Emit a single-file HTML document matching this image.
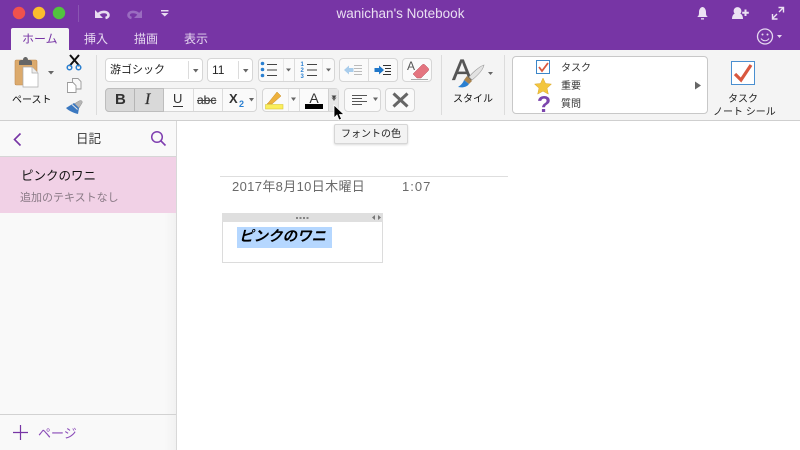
<!DOCTYPE html>
<html><head><meta charset="utf-8"><style>
*{box-sizing:border-box}
html,body{margin:0;padding:0}
body{width:800px;height:450px;overflow:hidden;position:relative;background:#fff;font-family:"Liberation Sans","Noto Sans CJK JP",sans-serif;color:#222}
.a{position:absolute;white-space:nowrap}
.box{position:absolute;background:#fafafa;border:1px solid #d6d6d6;border-radius:4px}
.dv{position:absolute;background:#dcdcdc;width:1px}
.fd{position:absolute;background:#e8e8e8;width:1px}
.tab{position:absolute;top:31px;font-size:12px;line-height:16px;color:#e6d8f0}
svg{position:absolute;left:0;top:0}
</style></head><body>
<div class="a" style="left:0;top:0;width:800px;height:50px;background:#7735a5"></div>
<div class="a" style="left:11px;top:28px;width:58px;height:22px;background:#f5f5f5;border-radius:2px 2px 0 0"></div>
<div class="a" style="left:0;top:50px;width:800px;height:71px;background:#f4f4f4;border-bottom:1px solid #cfcfcf"></div>
<div class="a" style="left:0;top:121px;width:177px;height:329px;background:linear-gradient(90deg,#f9f9f9 165px,#f1f1f1 176px);border-right:1px solid #d8d8d8"></div>
<div class="a" style="left:0;top:121px;width:176px;height:36px;background:#f9f9f9;border-bottom:1px solid #d6d6d6"></div>
<div class="a" style="left:0;top:157px;width:176px;height:56px;background:#f1d1e6"></div>
<div class="a" style="left:0;top:414px;width:176px;height:1px;background:#d2d2d2"></div>

<div class="a" style="left:0;width:800px;top:6px;text-align:center;font-size:13.5px;line-height:16px;color:#eadff2;padding-left:1px">wanichan's Notebook</div>
<div class="tab" style="left:22px;color:#7735a5">ホーム</div>
<div class="tab" style="left:84px">挿入</div>
<div class="tab" style="left:134px">描画</div>
<div class="tab" style="left:184px">表示</div>

<div class="box" style="left:105px;top:58px;width:98px;height:24px;background:#fff"></div>
<div class="dv" style="left:188px;top:61px;height:18px"></div>
<div class="a" style="left:110px;top:62px;font-size:11px;line-height:16px">游ゴシック</div>
<div class="box" style="left:207px;top:58px;width:46px;height:24px;background:#fff"></div>
<div class="dv" style="left:238px;top:61px;height:18px"></div>
<div class="a" style="left:212px;top:62px;font-size:12px;line-height:16px">11</div>

<div class="box" style="left:258px;top:58px;width:77px;height:24px"></div>
<div class="fd" style="left:283px;top:59px;height:22px"></div>
<div class="dv" style="left:294px;top:59px;height:22px"></div>
<div class="fd" style="left:322px;top:59px;height:22px"></div>
<div class="box" style="left:339px;top:58px;width:59px;height:24px"></div>
<div class="dv" style="left:368px;top:59px;height:22px"></div>
<div class="box" style="left:402px;top:58px;width:30px;height:24px"></div>

<div class="box" style="left:105px;top:88px;width:152px;height:24px"></div>
<div class="a" style="left:105px;top:88px;width:59px;height:24px;background:#d9d9d9;border:1px solid #bdbdbd;border-radius:4px 0 0 4px"></div>
<div class="dv" style="left:134px;top:89px;height:22px;background:#b5b5b5"></div>
<div class="dv" style="left:193px;top:89px;height:22px"></div>
<div class="dv" style="left:222px;top:89px;height:22px"></div>
<div class="a" style="left:115px;top:91px;font:bold 15px/18px 'Liberation Sans';color:#333">B</div>
<div class="a" style="left:145px;top:91px;font:italic 16px/18px 'Liberation Serif';color:#333;-webkit-text-stroke:.3px #333">I</div>
<div class="a" style="left:173px;top:91px;font:13px/16px 'Liberation Sans';color:#333">U</div>
<div class="a" style="left:173px;top:106px;width:10px;height:1px;background:#333"></div>
<div class="a" style="left:197px;top:92px;font:12px/16px 'Liberation Sans';color:#444;text-decoration:line-through;-webkit-text-stroke:.2px #444">abc</div>
<div class="a" style="left:229px;top:91px;font:bold 13px/16px 'Liberation Sans';color:#333">X</div>
<div class="a" style="left:239px;top:98px;font:bold 9px/12px 'Liberation Sans';color:#2a7fd0">2</div>

<div class="box" style="left:262px;top:88px;width:77px;height:24px"></div>
<div class="fd" style="left:288px;top:89px;height:22px"></div>
<div class="dv" style="left:299px;top:89px;height:22px"></div>
<div class="a" style="left:328px;top:89px;width:10px;height:22px;background:#e6e6e6;border-left:1px solid #d0d0d0"></div>
<div class="a" style="left:305px;top:90px;font:14px/16px 'Liberation Sans';color:#333;width:18px;text-align:center">A</div>
<div class="box" style="left:344px;top:88px;width:37px;height:24px"></div>
<div class="box" style="left:385px;top:88px;width:30px;height:24px"></div>

<div class="dv" style="left:96px;top:55px;height:60px"></div>
<div class="dv" style="left:441px;top:55px;height:60px"></div>
<div class="dv" style="left:504px;top:55px;height:60px"></div>
<div class="a" style="left:12px;top:94px;font-size:10px;line-height:14px;color:#111">ペースト</div>
<div class="a" style="left:453px;top:93px;font-size:10px;line-height:14px;color:#111">スタイル</div>
<div class="a" style="left:452px;top:54px;font:30px/34px 'Liberation Sans';color:#555;-webkit-text-stroke:.3px #555">A</div>

<div class="box" style="left:512px;top:56px;width:196px;height:58px;background:#fff;border-color:#c8c8c8"></div>
<div class="a" style="left:561px;top:62px;font-size:10px;line-height:14px;color:#333">タスク</div>
<div class="a" style="left:561px;top:80px;font-size:10px;line-height:14px;color:#333">重要</div>
<div class="a" style="left:561px;top:98px;font-size:10px;line-height:14px;color:#333">質問</div>
<div class="a" style="left:537px;top:92px;font:bold 23px/24px 'Liberation Sans';color:#7b45ad">?</div>
<div class="a" style="left:713px;top:93px;width:60px;text-align:center;font-size:10px;line-height:13px;color:#222">タスク<br>ノート シール</div>

<div class="a" style="left:76px;top:131px;font-size:12.5px;line-height:17px;color:#333">日記</div>
<div class="a" style="left:21px;top:168px;font-size:12.5px;line-height:17px;color:#111">ピンクのワニ</div>
<div class="a" style="left:20px;top:191px;font-size:11px;line-height:15px;color:#8a7a86">追加のテキストなし</div>
<div class="a" style="left:38px;top:426px;font-size:13px;line-height:16px;color:#8a4bb8">ページ</div>

<div class="a" style="left:220px;top:176px;width:288px;height:1px;background:#dedede"></div>
<div class="a" style="left:232px;top:179px;font-size:13px;letter-spacing:.35px;line-height:15px;color:#6a6a6a">2017年8月10日木曜日</div>
<div class="a" style="left:402px;top:179px;font-size:13px;letter-spacing:1px;line-height:15px;color:#6a6a6a">1:07</div>
<div class="a" style="left:222px;top:213px;width:161px;height:50px;border:1px solid #dcdcdc;background:#fff"></div>
<div class="a" style="left:222px;top:213px;width:161px;height:9px;background:#dfdfdf"></div>
<div class="a" style="left:237px;top:227px;width:95px;height:21px;background:#b5d7ff"></div>
<div class="a" style="left:239px;top:228px;font-size:14.5px;font-weight:bold;font-style:italic;line-height:18px;color:#000">ピンクのワニ</div>

<div class="a" style="left:334px;top:124px;width:74px;height:20px;background:#f3f3f3;border:1px solid #d6d6d6;border-radius:2px;box-shadow:0 1px 2px rgba(0,0,0,.15);font-size:10px;line-height:19px;text-align:center;color:#222">フォントの色</div>

<svg width="800" height="450" viewBox="0 0 800 450">
<circle cx="19" cy="13" r="6.200" fill="#f0524e"/><circle cx="39" cy="13" r="6.200" fill="#fbbd2e"/><circle cx="59" cy="13" r="6.200" fill="#52c33f"/>
<rect x="78" y="5" width="1" height="17" fill="#8a55b2"/>
<path d="M95 10v8h8z" fill="#e8dcf0"/><path d="M98 14.500c3-3.500 10-3.500 10.500 .5 0 1.500-1 2.500-3 3" fill="none" stroke="#e8dcf0" stroke-width="2.600"/>
<g transform="translate(237 0) scale(-1 1)"><path d="M95 10v8h8z" fill="#9a6cc0"/><path d="M98 14.500c3-3.500 10-3.500 10.500 .5 0 1.500-1 2.500-3 3" fill="none" stroke="#9a6cc0" stroke-width="2.600"/></g>
<path d="M161 10h7.500v1.500h-7.500zM161 13h7.500l-3.750 3.500z" fill="#e8dcf0"/>
<path d="M697 17c2-1 2-3 2-5 0-3 2-5 3.500-5s3.500 2 3.500 5c0 2 0 4 2 5z" fill="#ece2f3"/><path d="M701 18.200h3v1.300h-3z" fill="#ece2f3"/>
<circle cx="737.500" cy="11" r="3.900" fill="#ece2f3"/><path d="M732 19c0-5 3-6 5.500-6s5.500 1 5.500 6z" fill="#ece2f3"/><path d="M745.500 9.500v6.500M742.200 12.700h6.600" stroke="#ece2f3" stroke-width="2"/>
<path d="M772.500 18.500l4.500-4.500M772.500 14v5h5M783.500 7.500l-4.500 4.500M778.500 7.500h5v5" fill="none" stroke="#ece2f3" stroke-width="1.400"/>
<circle cx="765" cy="36.500" r="7.500" fill="none" stroke="#e6d8f0" stroke-width="1.300"/><circle cx="762.500" cy="34.500" r="1" fill="#e6d8f0"/><circle cx="767.500" cy="34.500" r="1" fill="#e6d8f0"/><path d="M761 38.500c2 3 6 3 8 0" fill="none" stroke="#e6d8f0" stroke-width="1.100"/><path d="M777 35h5l-2.500 3z" fill="#e6d8f0"/>

<rect x="15" y="60" width="22" height="25" rx="1.500" fill="#dcaa6c" stroke="#c08a50" stroke-width=".6"/>
<path d="M19 65v-3c0-2 2-2 4-2 0-4 5-4 5 0 2 0 4 0 4 2v3z" fill="#666"/>
<path d="M23 67h9l6 6v14H23z" fill="#fff" stroke="#aaa" stroke-width=".7"/><path d="M32 67v6h6" fill="#eee" stroke="#aaa" stroke-width=".7"/>
<path d="M48 71h6l-3 3.500z" fill="#666"/>
<path d="M70 55l9.500 11M79 55l-9.500 11" stroke="#111" stroke-width="2"/><circle cx="69.500" cy="67.500" r="2.300" fill="none" stroke="#2a7fd0" stroke-width="1.500"/><circle cx="78.500" cy="67.500" r="2.300" fill="none" stroke="#2a7fd0" stroke-width="1.500"/>
<path d="M72.500 78.500h5.500l3 3v7.500h-8.500z" fill="#f8f8f8" stroke="#999" stroke-width=".9"/>
<path d="M67.500 82.500h5.500l3 3v7h-8.500z" fill="#fff" stroke="#999" stroke-width=".9"/>
<path d="M74 104l5-3c2-1 4 0 3 2l-3 5z" fill="#b5b5b5" stroke="#888" stroke-width=".5"/><path d="M66 108l8-5 5 5-1 6c-4-1-9-3-12-6z" fill="#3b78c0"/><path d="M72 104.500l5.500 5" stroke="#e8e8e8"/>

<path d="M193 69h5.500l-2.750 3.500zM243 69h5.500l-2.750 3.500zM286 68.500h5l-2.500 3zM326 68.500h5l-2.500 3zM249 98h5l-2.500 3.500zM291 97.500h5l-2.500 3.500zM331.500 97.500h5l-2.500 3.500zM373 97.500h5l-2.500 3.500z" fill="#666"/>
<g fill="#2a7fd0"><circle cx="262.500" cy="63.500" r="1.800"/><circle cx="262.500" cy="69.500" r="1.800"/><circle cx="262.500" cy="75.500" r="1.800"/></g>
<path d="M267 64.500h10M267 70h10M267 75.500h10M307 64.500h10M307 70h10M307 75.500h10" stroke="#444"/>
<g fill="#2a7fd0" font-family="Liberation Sans" font-size="6" font-weight="bold"><text x="300.500" y="66">1</text><text x="300.500" y="72">2</text><text x="300.500" y="78">3</text></g>
<path d="M344 70l5-4.500v2.500h4.500v4h-4.500v2.500z" fill="#a9cdec"/><path d="M354 65.500h8M354 68.500h8M354 71.500h8M354 74.500h8" stroke="#bbb"/>
<path d="M384 70l-5-4.500v2.500h-4.500v4h4.500v2.500z" fill="#1f77c9"/><path d="M383 65.500h8M385 68.500h6M385 71.500h6M383 74.500h8" stroke="#333"/>
<text x="407" y="70" font-family="Liberation Sans" font-size="12" fill="#555">A</text>
<path d="M413 74l9-9c1-1 2-1 3 0l3 3c1 1 1 2 0 3l-7 7h-4z" fill="#e4747f" stroke="#b9525d" stroke-width=".5"/>
<path d="M411 79.500h17" stroke="#aaa"/>
<path d="M352 95.500h15M352 98.500h10M352 101.500h15M352 104.500h10" stroke="#555"/>
<path d="M393.500 93.500l14 13M407.500 93.500l-14 13" stroke="#666" stroke-width="3"/>
<path d="M269 102l-2 2h5l9-8-4-4z" fill="#eeb23e" stroke="#c98d28" stroke-width=".5"/>
<rect x="265.500" y="104.500" width="17.500" height="4.500" fill="#fbee5b" stroke="#d8c83e" stroke-width=".6"/>
<rect x="305" y="104" width="18" height="5" fill="#000"/>
<path d="M331.500 95.500h5l-2.500 3z" fill="#444"/>
<path d="M334 105v13l3-3 2 5 2.500-1-2-4.500h4.500z" fill="#000" stroke="#fff" stroke-width=".8"/>
<path d="M484 65c-4 1-12 8-15 12l3 3c5-4 11-10 12-15z" fill="#e2e2e2" stroke="#999" stroke-width=".6"/>
<path d="M467 76l5 5-3 3-5-4z" fill="#a8834f"/>
<path d="M464 80c-1 3-3 5-6 7 5 1 9 0 11-3z" fill="#2a7fd0"/>
<path d="M488 72h5l-2.500 3z" fill="#666"/>

<rect x="536.500" y="60.500" width="13" height="13" fill="#fff" stroke="#3c86c8"/><path d="M539 67l3 4 6-8" fill="none" stroke="#d9583f" stroke-width="1.800"/>
<path d="M543 78l2.500 5.500 6 .6-4.500 4 1.300 6-5.300-3-5.300 3 1.300-6-4.500-4 6-.6z" fill="#f3c63e" stroke="#d9a52a" stroke-width=".5"/>
<path d="M695 81.500l6 4-6 4z" fill="#666"/>
<rect x="731.500" y="61.500" width="23" height="23" fill="#fff" stroke="#4a8fd0"/><path d="M735 74l6 6 10-15" fill="none" stroke="#d9583f" stroke-width="3.200"/>

<path d="M20.500 133.500l-6 6 6 6" fill="none" stroke="#7735a5" stroke-width="1.600"/>
<circle cx="157" cy="137" r="5.300" fill="none" stroke="#7f3fb0" stroke-width="1.500"/><path d="M161 141l4.500 4.500" stroke="#7f3fb0" stroke-width="1.600"/>
<path d="M20.500 425v15M13 432.500h15" stroke="#7735a5" stroke-width="1.200"/>
<path d="M296 218h2M299.500 218h2M303 218h2M306.500 218h2" stroke="#666" stroke-width="1.500"/>
<path d="M375 215l-3 2.500 3 2.500zM378 215l3 2.500-3 2.500z" fill="#777"/>
</svg>
</body></html>
